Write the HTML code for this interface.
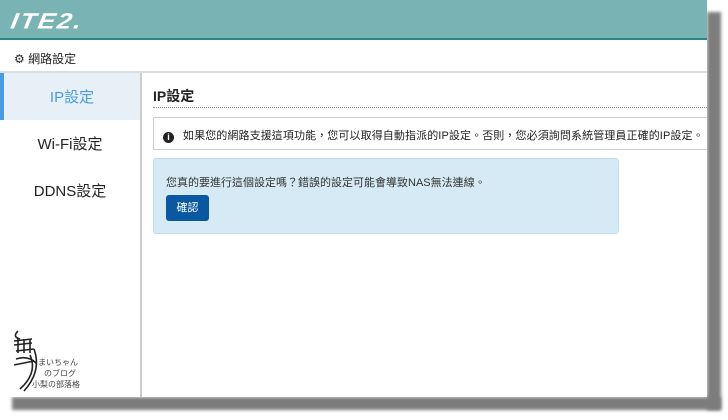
<!DOCTYPE html>
<html><head><meta charset="utf-8"><style>
*{margin:0;padding:0;box-sizing:border-box}
body{width:728px;height:420px;background:#fff;position:relative;overflow:hidden;font-family:"Liberation Sans","Noto Sans CJK TC",sans-serif;color:#222}
.sh1{position:absolute;left:707px;top:12px;width:14px;height:398px;background:#7d7d7d;filter:blur(1.5px)}
.sh2{position:absolute;left:12px;top:397px;width:709px;height:13px;background:#7d7d7d;filter:blur(1.5px)}
.page{position:absolute;left:0;top:0;width:707px;height:397px;background:#fff;overflow:hidden}
.hdr{position:absolute;left:0;top:0;width:707px;height:40px;background:#79b3b3;border-bottom:2px solid #2d8585}
.logo{position:absolute;left:11px;top:6px;font:italic 900 26px "Liberation Sans",sans-serif;color:#fff;letter-spacing:2px;transform:skewX(-10deg) scaleY(0.85)}
.bar{position:absolute;left:0;top:42px;width:707px;height:31px;border-bottom:2px solid #ddd;font-size:12px;padding:8px 0 0 14px}
.side{position:absolute;left:0;top:73px;width:142px;height:324px;border-right:2px solid #ccc}
.it{height:47px;text-align:center;font-size:15px;line-height:49px;color:#222}
.act{background:#e8f0f7;color:#4a9be0;border-left:4px solid #4a9be0}
.ttl{position:absolute;left:153px;top:86px;font-size:14px;font-weight:bold}
.dot{position:absolute;left:153px;top:107px;width:560px;border-top:1px dotted #888}
.info{position:absolute;left:153px;top:117px;width:570px;height:33px;border:1px solid #ccc;font-size:11px;padding:9px 0 0 9px;letter-spacing:0.1px}
.info b{display:inline-block;width:11px;height:11px;border-radius:50%;background:#222;color:#fff;font-size:9px;line-height:11px;text-align:center;margin-right:9px;vertical-align:-1px}
.alert{position:absolute;left:153px;top:158px;width:466px;height:76px;background:#d5eaf5;border:1px solid #bde0ef;border-radius:3px;font-size:11px;padding:15px 0 0 12px;color:#333}
.btn{position:absolute;left:12px;top:36px;width:43px;height:26px;background:#0a58a0;border-radius:3px;color:#fff;font-size:11px;text-align:center;line-height:26px}
.wm{position:absolute;left:8px;top:325px;width:100px;height:70px}
</style></head><body>
<div class="sh1"></div><div class="sh2"></div>
<div class="page">
<div class="hdr"><div class="logo">ITE2.</div></div>
<div class="bar">⚙ 網路設定</div>
<div class="side">
<div class="it act">IP設定</div>
<div class="it">Wi-Fi設定</div>
<div class="it">DDNS設定</div>
</div>
<div class="ttl">IP設定</div>
<div class="dot"></div>
<div class="info"><b>i</b>如果您的網路支援這項功能，您可以取得自動指派的IP設定。否則，您必須詢問系統管理員正確的IP設定。</div>
<div class="alert">您真的要進行這個設定嗎？錯誤的設定可能會導致NAS無法連線。<div class="btn">確認</div></div>
<svg class="wm" viewBox="0 0 100 70"><g stroke="#222" stroke-width="1.6" fill="none"><path d="M10 6 Q4 12 12 14 M6 16 L24 14 M6 20 L24 18 M8 26 L26 24 M10 14 L10 28 M16 14 L16 28 M22 14 L22 28 M8 34 Q20 30 28 38 M6 40 L26 36 M26 24 Q34 46 16 66 M22 30 Q30 48 12 64"/></g>
<text x="30" y="40" font-size="8" fill="#444" font-family="Noto Sans CJK JP,sans-serif">まいちゃん</text>
<text x="36" y="51" font-size="8" fill="#444" font-family="Noto Sans CJK JP,sans-serif">のブログ</text>
<text x="24" y="62" font-size="8" fill="#444" font-family="Noto Sans CJK JP,sans-serif">小梨の部落格</text></svg>
</div>
</body></html>
